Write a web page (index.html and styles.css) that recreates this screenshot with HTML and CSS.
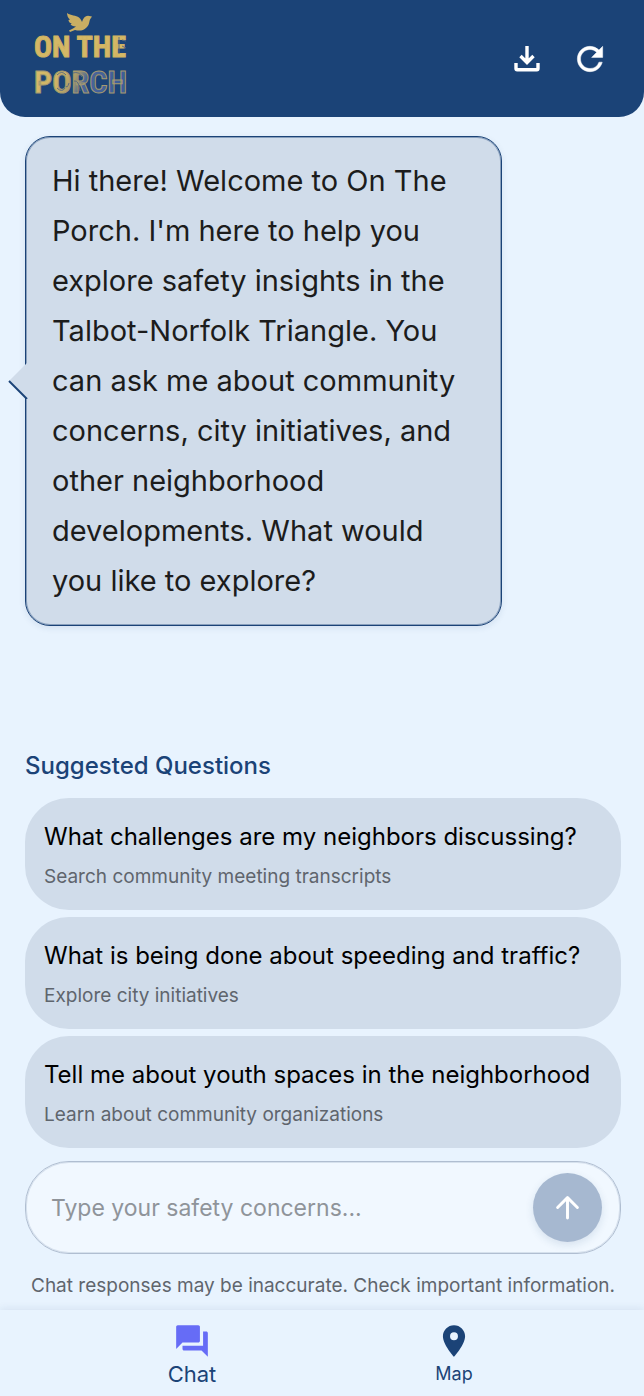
FILE: index.html
```html
<!DOCTYPE html>
<html lang="en">
<head>
<meta charset="utf-8">
<meta name="viewport" content="width=device-width, initial-scale=1">
<title>On The Porch</title>
<link rel="stylesheet" href="styles.css">
</head>
<body>
<div class="app">
  <header class="header">
    <svg class="logo" viewBox="0 0 104 94" role="img" aria-label="On The Porch">
      <defs>
        <linearGradient id="gold" x1="0" x2="1" y1="0" y2="0.2">
          <stop offset="0" stop-color="#d9bd6a"/>
          <stop offset="0.36" stop-color="#cdb265"/>
          <stop offset="0.5" stop-color="#a89a6a"/>
          <stop offset="0.62" stop-color="#4a6598"/>
          <stop offset="1" stop-color="#3d5d99"/>
        </linearGradient>
      </defs>
      <path class="bird" d="M36 4C40 7 45 6 48 8.500C50 10 50.500 12 51 13C52 9 54 7 57 6.700L61 7.500L59 10.500C58 13 58.500 16 55.500 18.500C52 22 48 22 44 21L39 23L38 21.500L42 19.500L45 17.500C42 17.500 40 16.500 39.500 15L41 14.500C38.500 14 37.500 12.500 37.500 11L39 10.500C37 9 36 6.500 36 4Z"/>
      <text class="logo-line" x="3" y="48">ON THE</text>
      <text class="logo-line logo-porch" x="3" y="84">PORCH</text>
      <path class="logo-grain" d="M26 66q5-5 9 0M35 77q1 3 3-3M26 79q5 5 8 0M42 64q6-2 9 4M43 72q5-1 6 10M88 28v17M91 31l4 1M91 37l4 2"/>
    </svg>
    <div class="actions">
      <button class="icon-button" type="button" aria-label="Download">
        <svg class="download-icon" viewBox="0 0 36 36" fill="none" stroke="currentColor" stroke-width="3.400"><path d="M18 5v16M11.500 15l6.500 6.500 6.500-6.500"/><path d="M7 22v5.500q0 1.200 1.200 1.200h19.600q1.200 0 1.200-1.200V22"/></svg>
      </button>
      <button class="icon-button" type="button" aria-label="Restart chat">
        <svg class="restart-icon" viewBox="0 0 24 24" fill="currentColor"><path d="M17.650 6.350A7.958 7.958 0 0 0 12 4c-4.420 0-7.990 3.580-7.990 8s3.570 8 7.990 8c3.730 0 6.840-2.550 7.730-6h-2.080A5.990 5.990 0 0 1 12 18c-3.310 0-6-2.690-6-6s2.690-6 6-6c1.660 0 3.140.69 4.220 1.780L13 11h7V4z" stroke="currentColor" stroke-width=".3"/></svg>
      </button>
    </div>
  </header>

  <main class="main">
    <section class="messages" aria-label="Conversation">
      <div class="bubble">
        <svg class="tail" viewBox="0 0 20 36" aria-hidden="true"><path class="tail-fill" d="M19 0L1 18l18 18z"/><path class="tail-line" d="M1 18l18 18"/></svg>
        <p>Hi there! Welcome to On The Porch. I'm here to help you explore safety insights in the Talbot-Norfolk Triangle. You can ask me about community concerns, city initiatives, and other neighborhood developments. What would you like to explore?</p>
      </div>
    </section>

    <section class="suggestions">
      <h2 class="suggestions-title">Suggested Questions</h2>
      <button class="suggestion" type="button">
        <span class="question">What challenges are my neighbors discussing?</span>
        <span class="hint">Search community meeting transcripts</span>
      </button>
      <button class="suggestion" type="button">
        <span class="question">What is being done about speeding and traffic?</span>
        <span class="hint">Explore city initiatives</span>
      </button>
      <button class="suggestion" type="button">
        <span class="question">Tell me about youth spaces in the neighborhood</span>
        <span class="hint">Learn about community organizations</span>
      </button>
    </section>

    <form class="composer">
      <input class="composer-input" type="text" aria-label="Message" placeholder="Type your safety concerns...">
      <button class="send" type="button" aria-label="Send">
        <svg viewBox="0 0 24 24" fill="none" stroke="currentColor" stroke-width="2.800" stroke-linecap="round" stroke-linejoin="round"><path d="M12 22V2.500M2.500 12L12 2.500 21.500 12"/></svg>
      </button>
    </form>
    <p class="disclaimer">Chat responses may be inaccurate. Check important information.</p>
  </main>

  <nav class="nav">
    <a class="nav-item nav-active" href="#chat">
      <svg class="nav-icon" viewBox="0 0 24 24" fill="currentColor"><path d="M21 6h-2v9H6v2c0 .55.45 1 1 1h11l4 4V7c0-.55-.45-1-1-1zm-4 6V3c0-.55-.45-1-1-1H3c-.55 0-1 .45-1 1v14l4-4h10c.55 0 1-.45 1-1z"/></svg>
      <span>Chat</span>
    </a>
    <a class="nav-item" href="#map">
      <svg class="nav-icon" viewBox="0 0 24 24" fill="currentColor"><path d="M12 2C8.130 2 5 5.130 5 9c0 5.250 7 13 7 13s7-7.750 7-13c0-3.870-3.130-7-7-7zm0 9.500a2.500 2.500 0 0 1 0-5 2.500 2.500 0 0 1 0 5z"/></svg>
      <span>Map</span>
    </a>
  </nav>
</div>
</body>
</html>
```

FILE: styles.css
```css
:root {
  --navy: #1b4377;
  --page: #e8f3fe;
  --panel: #d0dcea;
  --indigo: #666cf6;
}

* {
  box-sizing: border-box;
}

body {
  margin: 0;
  background: var(--page);
  font-family: Inter, "Liberation Sans", sans-serif;
}

button,
input {
  font: inherit;
}

p,
h2 {
  margin: 0;
}

.app {
  display: flex;
  flex-direction: column;
  min-height: 100vh;
}

.header {
  display: flex;
  align-items: center;
  justify-content: space-between;
  padding: 9px 34px 14px 31px;
  background: var(--navy);
  border-radius: 0 0 25px 25px;
}

.logo {
  width: 104px;
  height: 94px;
}

.bird {
  fill: #c9ae63;
}

.logo-line {
  font-family: "Liberation Sans Narrow", "Roboto Condensed", "Open Sans Condensed", "DejaVu Sans Condensed", sans-serif;
  font-weight: 700;
  font-size: 30px;
  fill: #d4b866;
  stroke: #d0b362;
  stroke-width: 1px;
}

.logo-porch {
  font-size: 32px;
  fill: url(#gold);
  stroke: #a49a70;
}

.logo-grain {
  fill: none;
  stroke: #5d6c80;
  stroke-width: 1px;
}

.actions {
  display: flex;
  gap: 23px;
  padding-top: 5px;
}

.icon-button {
  display: grid;
  place-items: center;
  width: 40px;
  height: 40px;
  padding: 0;
  border: 0;
  background: none;
  color: #fff;
}

.download-icon {
  width: 36px;
  height: 36px;
}

.restart-icon {
  width: 38px;
  height: 38px;
}

.main {
  display: flex;
  flex: 1;
  flex-direction: column;
  padding: 19px 23px 11px 25px;
}

.messages {
  flex: 1;
}

.bubble {
  position: relative;
  width: 80%;
  padding: 19px 26px;
  border: 1px solid var(--navy);
  border-radius: 25px;
  background: var(--panel);
  box-shadow: 0 2px 6px rgba(27, 67, 119, 0.1), inset 0 0 0 1px rgba(27, 67, 119, 0.4);
  color: #1c1c1c;
  font-size: 29px;
  line-height: 50px;
}

.tail {
  position: absolute;
  top: calc(50% - 18px);
  left: -18px;
  width: 20px;
  height: 36px;
}

.tail-fill {
  fill: var(--panel);
}

.tail-line {
  fill: none;
  stroke: var(--navy);
  stroke-width: 2px;
}

.suggestions {
  display: flex;
  flex-direction: column;
  gap: 7px;
}

.suggestions-title {
  margin-bottom: 9px;
  color: var(--navy);
  font-size: 24px;
  font-weight: 500;
  line-height: 32px;
}

.suggestion {
  display: flex;
  flex-direction: column;
  gap: 9px;
  padding: 22px 19px 19px;
  border: 0;
  border-radius: 44px;
  background: var(--panel);
  text-align: left;
}

.question {
  color: #000;
  font-size: 24px;
  line-height: 34px;
}

.hint {
  color: #5f656d;
  font-size: 19px;
  line-height: 28px;
}

.composer {
  display: flex;
  align-items: center;
  margin-top: 13px;
  padding: 11px 18px 11px 25px;
  border: 1px solid #b0bed1;
  border-radius: 44px;
  background: #f1f8ff;
  box-shadow: inset 0 0 0 1px rgba(176, 190, 209, 0.4);
}

.composer-input {
  flex: 1;
  min-width: 0;
  padding: 0;
  border: 0;
  outline: 0;
  background: none;
  color: #1c1c1c;
  font-size: 23px;
}

.composer-input::placeholder {
  color: #8f949a;
  opacity: 1;
}

.send {
  display: grid;
  place-items: center;
  width: 69px;
  height: 69px;
  padding: 0;
  border: 0;
  border-radius: 50%;
  background: #a6b8d0;
  box-shadow: 0 3px 8px rgba(27, 67, 119, 0.12);
  color: #fff;
}

.send svg {
  width: 25px;
  height: 25px;
}

.disclaimer {
  margin-top: 19px;
  color: #5f656d;
  font-size: 19px;
  line-height: 26px;
  text-align: center;
}

.nav {
  display: flex;
  padding: 12px 59px 8px 61px;
  background: var(--page);
  box-shadow: 0 -1px 8px rgba(27, 67, 119, 0.1);
}

.nav-item {
  display: flex;
  flex: 1;
  flex-direction: column;
  align-items: center;
  color: var(--navy);
  font-size: 18px;
  line-height: 28px;
  text-decoration: none;
}

.nav-icon {
  width: 38px;
  height: 38px;
}

.nav-active {
  font-size: 22px;
}

.nav-active .nav-icon {
  color: var(--indigo);
}
```
